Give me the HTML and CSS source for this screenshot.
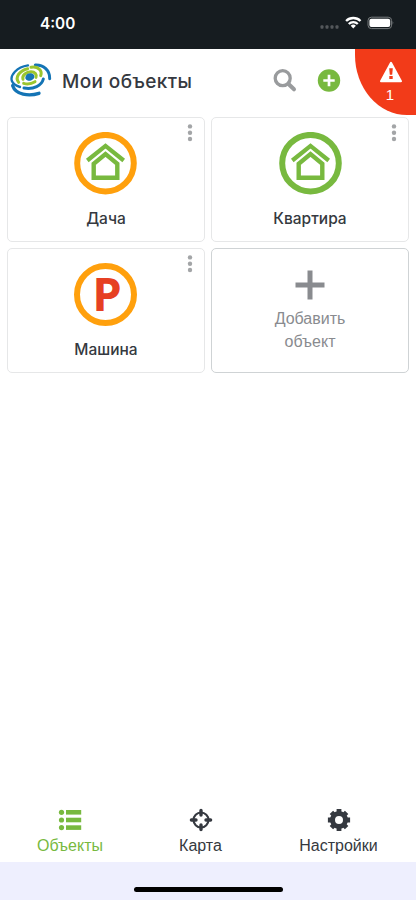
FILE: index.html
```html
<!DOCTYPE html>
<html lang="ru">
<head>
<meta charset="utf-8">
<meta name="viewport" content="width=device-width, initial-scale=1">
<title>Мои объекты</title>
<link rel="stylesheet" href="styles.css">
</head>
<body>
<svg width="0" height="0" class="defs">
  <symbol id="house" viewBox="0 0 63 63">
    <circle cx="31.5" cy="31.2" r="28.3" fill="none" stroke="var(--ring)" stroke-width="6"/>
    <path d="M13.3 28.5 31.5 13.9 49.7 28.5" fill="none" stroke="#78b93f" stroke-width="4.2"/>
    <path d="M19.7 45.7V31.7L31.5 22.1 43.3 31.7V45.7Z" fill="none" stroke="#78b93f" stroke-width="4.4"/>
  </symbol>
  <symbol id="dots" viewBox="0 0 6 18">
    <g fill="#a3a5a7"><circle cx="3" cy="2.4" r="2.2"/><circle cx="3" cy="8.7" r="2.2"/><circle cx="3" cy="15" r="2.2"/></g>
  </symbol>
</svg>
<div class="app">
  <div class="status">
    <span class="time">4:00</span>
    <svg class="signals" width="76" height="16" viewBox="0 0 76 16">
      <g fill="#54585b"><rect x="1.5" y="10.3" width="3" height="3.4" rx="1"/><rect x="6.5" y="10.3" width="3" height="3.4" rx="1"/><rect x="11.5" y="10.3" width="3" height="3.4" rx="1"/><rect x="16.5" y="10.3" width="3" height="3.4" rx="1"/></g>
      <g fill="none" stroke="#fff" stroke-width="2.3"><path d="M27.1 6a10.2 10.2 0 0 1 14.4 0"/><path d="M29.8 9a6.4 6.4 0 0 1 9 0"/></g>
      <path d="M31.7 10.7a3.8 3.8 0 0 1 5.2 0L34.3 13.5Z" fill="#fff"/>
      <rect x="49" y="2.2" width="23.6" height="11.4" rx="3.4" fill="none" stroke="#777b7d"/>
      <rect x="50.4" y="3.7" width="20.8" height="8.4" rx="2" fill="#fff"/>
      <path d="M73.6 6.1q1.6 1.7 0 3.6Z" fill="#777b7d"/>
    </svg>
  </div>
  <header class="header">
    <svg class="logo" width="42" height="36" viewBox="12 15 126 108" fill="none" stroke-linecap="round">
      <g stroke="#1474b5">
        <path d="M66 22C32 27 11 52 18 70C22 79 31 84 42 87" stroke-width="7"/>
        <path d="M88 21C113 20 132 38 131 62" stroke-width="9"/>
        <path d="M20 83C29 110 68 116 99 106" stroke-width="10"/>
        <path d="M54 90C83 95 107 83 112 63" stroke-width="9"/>
      </g>
      <g stroke="#9bc52e" stroke-width="9">
        <path d="M38 73C26 58 40 38 65 32"/>
        <path d="M75 28C96 24 110 38 104 53"/>
        <path d="M51 64C47 51 62 42 75 41C87 41 93 50 90 58"/>
        <path d="M53 76C67 80 79 76 87 71"/>
      </g>
      <ellipse cx="71.5" cy="57" rx="14" ry="11" fill="#1474b5" transform="rotate(-20 71.5 57)"/>
    </svg>
    <h1>Мои объекты</h1>
    <svg class="search" width="24" height="24" viewBox="0 0 24 24"><circle cx="9.7" cy="9.2" r="7.5" fill="none" stroke="#999b9d" stroke-width="3.3"/><path d="M15.5 15 21 20.3" stroke="#999b9d" stroke-width="4" stroke-linecap="round"/></svg>
    <svg class="add" width="24" height="24" viewBox="0 0 24 24"><circle cx="12" cy="11.5" r="11.2" fill="#78b93f"/><path d="M12 5.8V17.2M6.3 11.5H17.7" stroke="#fff" stroke-width="2.7"/></svg>
  </header>
  <div class="alert">
    <svg width="24" height="22" viewBox="0 0 24 22"><path d="M13 1.8 23 20.2H3Z" fill="#fff" stroke="#fff" stroke-width="2" stroke-linejoin="round"/><path d="M11.2 7.2H14.8L14.2 13.7H11.8ZM11.3 15H14.7V18H11.3Z" fill="#f23b19"/></svg>
    <span>1</span>
  </div>
  <main class="grid">
    <section class="card warn">
      <svg class="ring" width="63" height="63"><use href="#house"/></svg>
      <span class="name">Дача</span>
      <svg class="more" width="6" height="18"><use href="#dots"/></svg>
    </section>
    <section class="card">
      <svg class="ring" width="63" height="63"><use href="#house"/></svg>
      <span class="name">Квартира</span>
      <svg class="more" width="6" height="18"><use href="#dots"/></svg>
    </section>
    <section class="card warn">
      <div class="ring parking"><span>P</span></div>
      <span class="name">Машина</span>
      <svg class="more" width="6" height="18"><use href="#dots"/></svg>
    </section>
    <section class="card new">
      <svg width="30" height="30" viewBox="0 0 30 30"><path d="M15 .5V29.5M.5 15H29.5" stroke="#898b8f" stroke-width="5"/></svg>
      <span>Добавить<br>объект</span>
    </section>
  </main>
  <nav class="tabs">
    <a class="tab active">
      <svg width="24" height="24" viewBox="0 0 24 24" fill="#78b93f"><circle cx="3.5" cy="4.3" r="2.6"/><circle cx="3.5" cy="12" r="2.6"/><circle cx="3.5" cy="19.6" r="2.6"/><rect x="8" y="2" width="15.2" height="4.6"/><rect x="8" y="9.7" width="15.2" height="4.6"/><rect x="8" y="17.3" width="15.2" height="4.6"/></svg>
      <span>Объекты</span>
    </a>
    <a class="tab">
      <svg width="24" height="24" viewBox="0 0 24 24" fill="none" stroke="#353940"><circle cx="12" cy="12" r="7.5" stroke-width="2.1"/><path d="M12 2.4V7M12 17V21.6M2.4 12H7M17 12H21.6" stroke-width="3.4" stroke-linecap="round"/></svg>
      <span>Карта</span>
    </a>
    <a class="tab">
      <svg width="24" height="24" viewBox="0 0 24 24" fill="none" stroke="#353940"><circle cx="12" cy="12" r="6.5" stroke-width="5"/><g stroke-width="4.8"><path d="M12 .9V5M12 19V23.1M.9 12H5M19 12H23.1M4.4 4.4 7 7M17 17 19.6 19.6M4.4 19.6 7 17M17 7 19.6 4.4"/></g></svg>
      <span>Настройки</span>
    </a>
  </nav>
  <footer class="home"><div class="bar"></div></footer>
</div>
</body>
</html>
```
FILE: styles.css
```css
* { box-sizing: border-box; }
body { margin: 0; background: #fff; color: #353940; font-family: "Liberation Sans", Arial, sans-serif; }
svg { display: block; flex: none; }
.defs { position: absolute; }
.app { position: relative; width: 416px; height: 900px; display: flex; flex-direction: column; overflow: hidden; }
.status { height: 49px; flex: none; background: #161c20; color: #fff; display: flex; justify-content: space-between; padding: 15px 21px 0 40px; }
.time { font-family: Inter, sans-serif; font-weight: 600; font-size: 15.3px; line-height: 17px; }
.header { height: 68px; flex: none; display: flex; align-items: center; padding: 0 75px 5px 10px; }
.header h1 { margin: 2px 0 0 10px; font-family: Inter, sans-serif; font-size: 19px; font-weight: 500; line-height: 26px; letter-spacing: .38px; white-space: nowrap; flex: 1; }
.search { margin-right: 20px; }
.alert { position: absolute; right: 0; top: 49px; width: 61px; height: 66px; background: #f23b19; border-radius: 0 0 0 52px / 0 0 0 60px; color: #fff; display: flex; flex-direction: column; align-items: center; padding: 12px 0 0 9px; font-size: 15px; line-height: 24px; }
.grid { display: grid; grid-template-columns: 198px 198px; grid-auto-rows: 125px; gap: 6px; padding: 0 7px; }
.card { --ring: #78b93f; position: relative; border: 1px solid #e6e7e8; border-radius: 5px; display: flex; flex-direction: column; align-items: center; padding-top: 14px; }
.warn { --ring: #ffa00d; }
.ring { width: 63px; height: 63px; }
.warn .ring { margin-right: 1px; }
.parking { border: 6px solid var(--ring); border-radius: 50%; display: flex; align-items: center; justify-content: center; color: #e64023; font: 700 47px/46px "Open Sans", sans-serif; padding: 0 0 4px 3px; }
.name { margin-top: 14px; font-family: Inter, sans-serif; font-weight: 500; font-size: 15.5px; line-height: 20px; }
.more { position: absolute; right: 11px; top: 6px; }
.new { border-color: #cfd3d5; padding-top: 21px; color: #898b8f; font-size: 16px; line-height: 23px; text-align: center; }
.new span { margin-top: 7px; }
.grid > :nth-child(even) { justify-self: end; width: 198px; }
.tabs { margin-top: auto; height: 72px; display: grid; grid-template-columns: 140px 121px 155px; padding-top: 18px; }
.tab { display: flex; flex-direction: column; align-items: center; font-size: 16px; line-height: 20px; gap: 4px; }
.active { color: #78b93f; }
.home { height: 38px; flex: none; background: #eeeffe; display: flex; justify-content: center; padding-top: 25px; }
.bar { width: 149px; height: 5px; border-radius: 3px; background: #000; }
```
